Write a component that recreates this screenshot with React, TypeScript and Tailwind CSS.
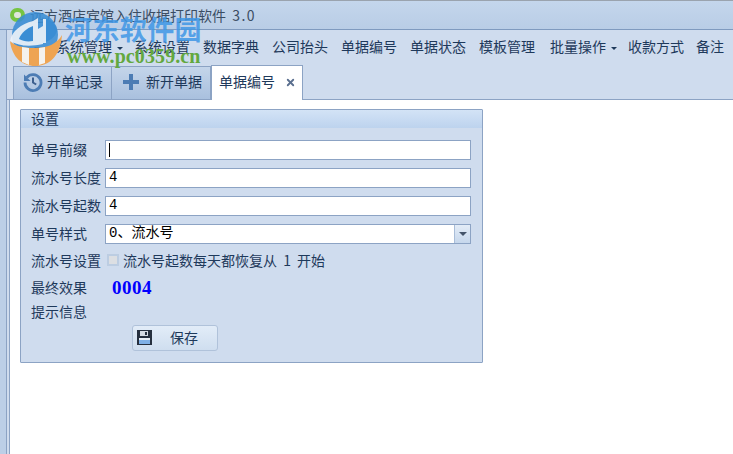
import { X } from "lucide-react";

const CJK = "font-['Noto_Sans_CJK_SC','Liberation_Sans',sans-serif]";

const menus = [
  { label: "系统管理", caret: true, w: "w-[78px]" },
  { label: "系统设置", w: "w-[69px]" },
  { label: "数据字典", w: "w-[69px]" },
  { label: "公司抬头", w: "w-[69px]" },
  { label: "单据编号", w: "w-[69px]" },
  { label: "单据状态", w: "w-[69px]" },
  { label: "模板管理", w: "w-[71px]" },
  { label: "批量操作", caret: true, w: "w-[78px]" },
  { label: "收款方式", w: "w-[68px]" },
  { label: "备注", w: "w-[36px]" },
];

function Caret() {
  return <span className="ml-[5px] mt-[3px] h-0 w-0 border-x-[3px] border-t-[3px] border-x-transparent border-t-[#1e395b]" />;
}

function HistoryIcon() {
  return (
    <svg width="20" height="20" viewBox="0 0 20 20" fill="none" stroke="#4c7cb4" strokeWidth="2.8">
      <path d="M3.8 5.5A8 8 0 1 1 2 10.5" />
      <path d="M1 2.5v6.5h6.5z" fill="#4c7cb4" stroke="none" />
      <path d="M10 5.5V10.5l3.2 2" strokeWidth="2" stroke="#3c5f8e" />
    </svg>
  );
}

function PlusIcon() {
  return (
    <svg width="18" height="18" viewBox="0 0 18 18">
      <path d="M7 1h4v6h6v4h-6v6H7v-6H1V7h6z" fill="#4c7cb4" />
    </svg>
  );
}

function SaveIcon() {
  return (
    <svg width="15" height="15" viewBox="0 0 15 15">
      <rect width="15" height="15" fill="#26303f" />
      <rect x="3" y="1" width="8" height="5" fill="#d5dbe4" />
      <rect x="8" y="2" width="2" height="3" fill="#26303f" />
      <rect x="2" y="8" width="11" height="6" fill="#7fb0e6" />
      <rect x="2" y="8" width="11" height="2" fill="#e8eef6" />
    </svg>
  );
}

function Field({ label, value, caret }: { label: string; value?: string; caret?: boolean }) {
  return (
    <div className="flex h-5 items-center">
      <span className="w-[74px] whitespace-nowrap pb-[2px] text-[14px]">{label}</span>
      <div className="flex h-5 w-[366px] items-center border border-[#8ca3c4] bg-white pl-[3px] font-['Liberation_Mono','Noto_Sans_CJK_SC',monospace] text-[14px] text-black">
        {value === undefined ? <span className="h-[14px] w-px bg-black" /> : <span className="flex-1 pb-px">{value}</span>}
        {caret && (
          <span className="flex h-full w-[16px] items-center justify-center border-l border-[#a9bdd8] bg-gradient-to-b from-[#e3ecf7] to-[#c6d7ec]">
            <span className="h-0 w-0 border-x-[4px] border-t-[4px] border-x-transparent border-t-[#44546a]" />
          </span>
        )}
      </div>
    </div>
  );
}

function Watermark() {
  return (
    <div className="absolute left-[7px] top-[11px] flex items-start">
      <svg width="57" height="56" viewBox="0 0 57 56">
        <circle cx="28" cy="24" r="23" fill="#3a8dd4" fillOpacity="0.88" />
        <path d="M3 30C5 47 16 55 28 55C42 55 53 46 55 24C50 33 40 37 28 37C16 37 8 35 3 30Z" fill="#eea452" />
        <path d="M15 36l7 1v17l-7-3zM32 37l6-1v16l-6 2z" fill="#f4f2ee" />
        <path d="M3 30C5 20 14 13 26 10L31 7V18L36 15V33C22 36 12 35 3 30Z" fill="#eef3f8" fillOpacity="0.9" />
        <path d="M12 28C14 22 20 17 26 15V30C20 31 16 30 12 28Z" fill="#3a8dd4" />
        <path d="M38 7C46 10 50 15 50 20C48 26 44 29 38 31Z" fill="#3a8dd4" />
        <path d="M36 8h3v24h-3z" fill="#eef3f8" fillOpacity="0.9" />
      </svg>
      <div className="ml-[1px] mt-[2px]">
        <div className={`h-[32px] whitespace-nowrap text-[27px] font-bold leading-[32px] tracking-[0.4px] text-[#3f97e6]/85 ${CJK}`}>河东软件园</div>
        <div className="ml-[2px] mt-[2px] whitespace-nowrap font-['Liberation_Serif',serif] text-[20px] font-bold leading-[18px] tracking-[0.1px] text-[#63a83f]">www.pc0359.cn</div>
      </div>
    </div>
  );
}

export default function App() {
  return (
    <div className={`relative flex h-[454px] w-[733px] flex-col overflow-hidden bg-white text-[#1e395b] ${CJK}`}>
      {/* 标题栏 */}
      <div className="flex h-[30px] shrink-0 items-center border-y border-t-[#9aa3ae] border-b-[#7f9abf] bg-gradient-to-b from-[#c4d6ec] to-[#b9cde6] pl-[10px] text-[14px] text-[#3b4d63]">
        <span className="mr-[5px] h-[14px] w-[15px] shrink-0 rounded-full border-[4px] border-[#76c442] bg-[#dfe6dc]" />
        <span className="whitespace-nowrap [word-spacing:3px]">
          远方酒店宾馆入住收据打印软件 <span className="tracking-[1.5px]">3.0</span>
        </span>
      </div>

      <div className="flex min-h-0 flex-1">
        <div className="w-[7px] shrink-0 border-r border-[#8ca3c4] bg-[#bccfe7]" />
        <div className="flex min-w-0 flex-1 flex-col">
          {/* 菜单 */}
          <div className="flex h-[69px] shrink-0 flex-col bg-[#cfdcee] pl-[2px]">
            <div className="flex h-[36px] shrink-0 items-center pb-[3px] text-[14px]">
              <div className="ml-[8px] flex w-[39px] shrink-0 items-center">
                <span className="grid h-[12px] w-[12px] grid-cols-2 gap-px">
                  <span className="bg-[#6f93c0]" />
                  <span className="bg-[#6f93c0]" />
                  <span className="bg-[#6f93c0]" />
                  <span className="bg-[#6f93c0]" />
                </span>
                <Caret />
              </div>
              {menus.map((m) => (
                <div key={m.label} className={`flex shrink-0 items-center whitespace-nowrap ${m.w}`}>
                  {m.label}
                  {m.caret && <Caret />}
                </div>
              ))}
            </div>
            <div className="flex h-[33px] items-end pl-[4px] text-[14px]">
              <div className="flex h-[33px] w-[99px] items-center gap-[4px] border border-b-0 border-[#8ca3c4] bg-gradient-to-b from-[#c4d5ea] to-[#a9c0de] pb-[3px] pl-[9px]">
                <HistoryIcon />
                开单记录
              </div>
              <div className="flex h-[33px] w-[99px] items-center gap-[6px] border border-b-0 border-l-0 border-[#8ca3c4] bg-gradient-to-b from-[#c4d5ea] to-[#a9c0de] pb-[3px] pl-[10px]">
                <PlusIcon />
                新开单据
              </div>
              <div className="relative z-10 -mb-px flex h-[35px] w-[92px] items-center border border-b-0 border-[#8ca3c4] bg-white pb-[3px] pl-[7px]">
                单据编号
                <X size={11} strokeWidth={4} className="ml-[10px] mt-[2px] text-[#5a6f8f]" />
              </div>
            </div>
          </div>

          {/* 内容 */}
          <div className="flex flex-1 border-t border-[#8ca3c4]">
            <div className="w-[3px] shrink-0 border-r border-[#8ca3c4] bg-[#cfdcee]" />
            <div className="flex-1 pl-[10px] pt-[9px]">
              <div className="h-[254px] w-[463px] rounded-[1px] border border-[#8ca3c4] bg-[#cfdcee]">
                <div className="flex h-[18px] items-center bg-gradient-to-b from-[#d3e3f6] to-[#bdd3ee] pb-[2px] pl-[10px] text-[14px]">设置</div>
                <div className="flex flex-col gap-2 pl-[10px] pt-[12px]">
                  <Field label="单号前缀" />
                  <Field label="流水号长度" value="4" />
                  <Field label="流水号起数" value="4" />
                  <Field label="单号样式" value="0、流水号" caret />
                </div>
                <div className="mt-[7px] flex h-5 items-center pb-[2px] pl-[10px] text-[14px]">
                  <span className="w-[76px] whitespace-nowrap">流水号设置</span>
                  <span className="mr-[4px] h-3 w-3 border-2 border-[#bccde2] bg-[#dcdfe3]" />
                  <span className="whitespace-nowrap [word-spacing:3px]">流水号起数每天都恢复从 1 开始</span>
                </div>
                <div className="mt-[7px] flex h-5 items-center pl-[10px] text-[14px]">
                  <span className="w-[81px] pb-[2px]">最终效果</span>
                  <span className="font-['Liberation_Serif',serif] text-[19px] font-bold tracking-[0.5px] text-[#0000ff]">0004</span>
                </div>
                <div className="mt-[4px] flex h-5 items-center pb-[2px] pl-[10px] text-[14px]">提示信息</div>
                <div className="mt-[3px] pl-[111px]">
                  <button className="flex h-[26px] w-[86px] items-center rounded-[3px] border border-[#b0c2da] bg-gradient-to-b from-[#e2ecf8] to-[#cfdeef] pb-px pl-[4px] text-[14px]">
                    <SaveIcon />
                    <span className="ml-[18px]">保存</span>
                  </button>
                </div>
              </div>
            </div>
          </div>
        </div>
      </div>

      <Watermark />
    </div>
  );
}
